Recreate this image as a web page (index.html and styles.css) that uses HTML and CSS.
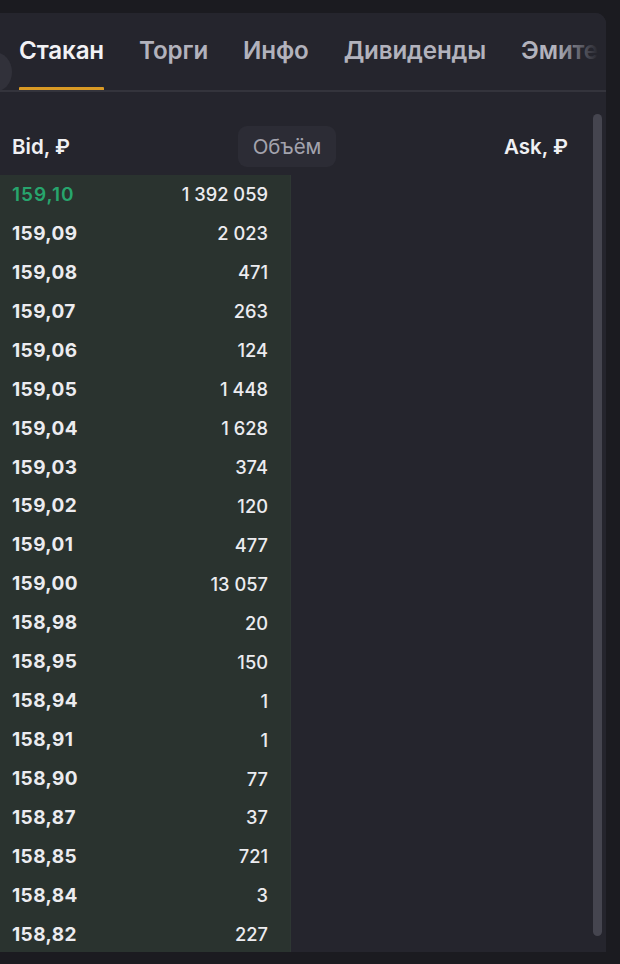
FILE: index.html
```html
<!DOCTYPE html>
<html lang="ru">
<head>
<meta charset="utf-8">
<link rel="stylesheet" href="styles.css">
</head>
<body>
<div class="screen">
  <div class="panel">
    <div class="tabs-wrap">
      <div class="tab-scroll"></div>
      <div class="tabs">
        <div class="tab active">Стакан</div>
        <div class="tab">Торги</div>
        <div class="tab">Инфо</div>
        <div class="tab">Дивиденды</div>
        <div class="tab">Эмитент</div>
      </div>
      <div class="tabs-fade"></div>
    </div>
    <div class="book">
      <div class="book-main">
        <div class="head">
          <div class="h-bid">Bid, ₽</div>
          <div class="h-vol">Объём</div>
          <div class="h-ask">Ask, ₽</div>
        </div>
        <div class="rows">
          <div class="bids">
            <div class="row"><span class="price up">159,10</span><span class="vol">1 392 059</span></div>
            <div class="row"><span class="price">159,09</span><span class="vol">2 023</span></div>
            <div class="row"><span class="price">159,08</span><span class="vol">471</span></div>
            <div class="row"><span class="price">159,07</span><span class="vol">263</span></div>
            <div class="row"><span class="price">159,06</span><span class="vol">124</span></div>
            <div class="row"><span class="price">159,05</span><span class="vol">1 448</span></div>
            <div class="row"><span class="price">159,04</span><span class="vol">1 628</span></div>
            <div class="row"><span class="price">159,03</span><span class="vol">374</span></div>
            <div class="row"><span class="price">159,02</span><span class="vol">120</span></div>
            <div class="row"><span class="price">159,01</span><span class="vol">477</span></div>
            <div class="row"><span class="price">159,00</span><span class="vol">13 057</span></div>
            <div class="row"><span class="price">158,98</span><span class="vol">20</span></div>
            <div class="row"><span class="price">158,95</span><span class="vol">150</span></div>
            <div class="row"><span class="price">158,94</span><span class="vol">1</span></div>
            <div class="row"><span class="price">158,91</span><span class="vol">1</span></div>
            <div class="row"><span class="price">158,90</span><span class="vol">77</span></div>
            <div class="row"><span class="price">158,87</span><span class="vol">37</span></div>
            <div class="row"><span class="price">158,85</span><span class="vol">721</span></div>
            <div class="row"><span class="price">158,84</span><span class="vol">3</span></div>
            <div class="row"><span class="price">158,82</span><span class="vol">227</span></div>
          </div>
        </div>
      </div>
      <div class="scrollbar"><div class="thumb"></div></div>
    </div>
  </div>
</div>
</body>
</html>
```
FILE: styles.css
```css
* { box-sizing: border-box; }
html, body {
  margin: 0;
  padding: 0;
  background: #1b1b20;
  font-family: Inter, "Noto Sans", sans-serif;
}
.screen {
  width: 620px;
  height: 964px;
  padding-top: 13px;
  overflow: hidden;
}
.panel {
  width: 606px;
  height: 939px;
  background: #25252d;
  border-radius: 0 11px 0 0;
  overflow: hidden;
  display: flex;
  flex-direction: column;
}
.tabs-wrap {
  position: relative;
  height: 79px;
  border-bottom: 2px solid #34343c;
  flex: none;
  overflow: hidden;
}
.tab-scroll {
  position: absolute;
  left: -24px;
  top: 39px;
  width: 36px;
  height: 40px;
  border-radius: 50%;
  background: #31313a;
}
.tabs {
  display: flex;
  gap: 35px;
  padding-left: 19px;
  height: 100%;
  white-space: nowrap;
}
.tab {
  font-size: 24.2px;
  font-weight: 600;
  color: #b2b2bc;
  padding-top: 23px;
  position: relative;
  letter-spacing: -0.15px;
}
.tab.active { color: #f2f2f5; }
.tab.active::after {
  content: "";
  position: absolute;
  left: 0;
  right: 0;
  bottom: -1px;
  height: 4px;
  border-radius: 1px;
  background: #d99a25;
}
.tabs-fade {
  position: absolute;
  right: 0;
  top: 0;
  width: 50px;
  height: 100%;
  background: linear-gradient(to right, rgba(37,37,45,0), #25252d 85%);
}
.book {
  flex: 1;
  display: flex;
  min-height: 0;
}
.book-main {
  flex: 1;
  display: flex;
  flex-direction: column;
}
.head {
  height: 83px;
  display: flex;
  align-items: flex-start;
  padding: 34px 0 0 12px;
  flex: none;
}
.h-bid {
  width: 226px;
  height: 41px;
  display: flex;
  align-items: center;
  font-size: 20.5px;
  font-weight: 600;
  color: #f0f0f3;
}
.h-vol {
  width: 98px;
  height: 41px;
  display: flex;
  align-items: center;
  justify-content: center;
  border-radius: 9px;
  background: #2c2c35;
  color: #a3a3ad;
  font-size: 20.5px;
}
.h-ask {
  flex: 1;
  height: 41px;
  display: flex;
  align-items: center;
  justify-content: flex-end;
  font-size: 20.5px;
  font-weight: 600;
  color: #f0f0f3;
}
.rows { flex: 1; }
.bids {
  width: 291px;
  background: #2a332f;
  border-right: 1px solid #2e3733;
}
.row {
  height: 38.95px;
  display: flex;
  align-items: center;
  justify-content: space-between;
  padding: 0 22px 0 12px;
  font-size: 19px;
  color: #ececf0;
}
.price {
  font-weight: 700;
  letter-spacing: 0.4px;
}
.price.up { color: #27a56d; font-weight: 600; letter-spacing: 1px; }
.vol { font-weight: 500; font-size: 18.3px; }
.scrollbar {
  width: 38px;
  flex: none;
  padding: 22px 4px 0 0;
  display: flex;
  justify-content: flex-end;
}
.thumb {
  width: 9px;
  height: 822px;
  border-radius: 5px;
  background: #45454f;
}
```
